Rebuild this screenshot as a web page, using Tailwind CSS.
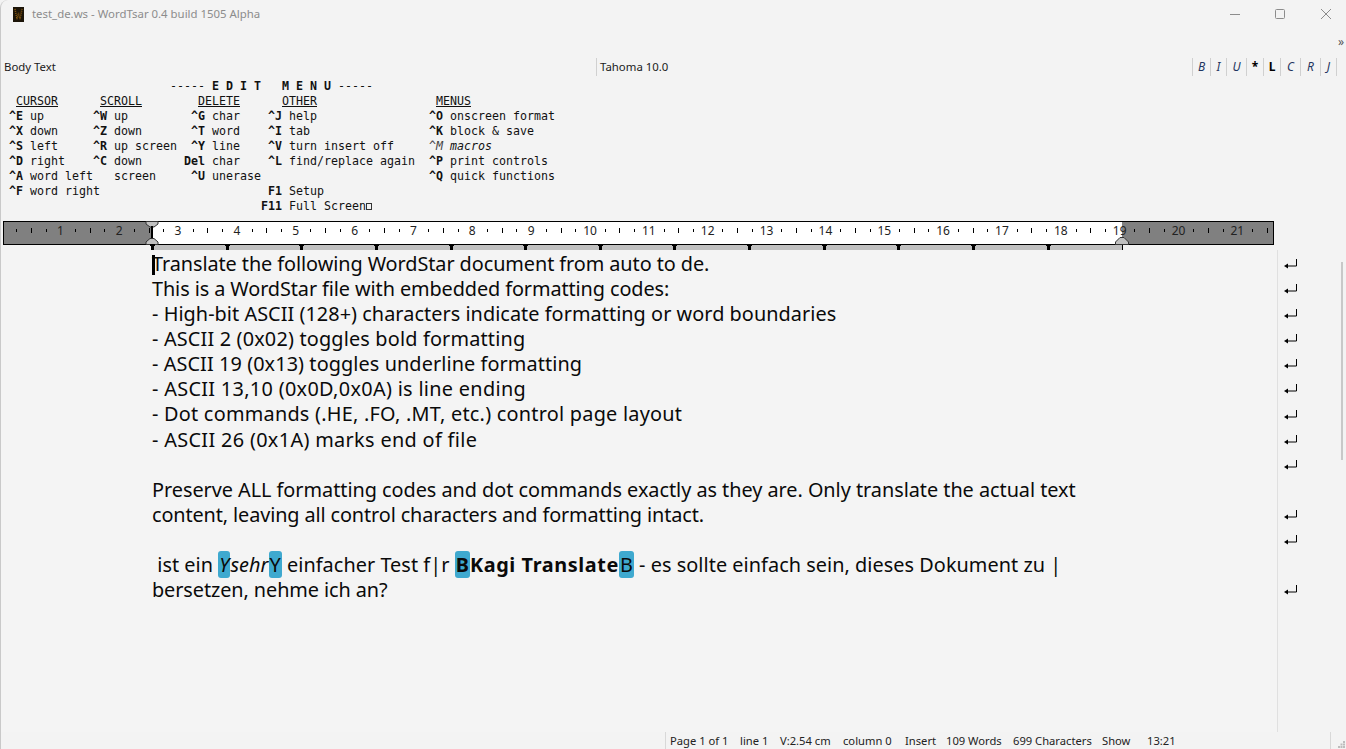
<!DOCTYPE html>
<html lang="en">
<head>
  <meta charset="UTF-8" />
  <title>WordTsar</title>
  <script src="https://cdn.jsdelivr.net/npm/@tailwindcss/browser@4"></script>
</head>
<body class="bg-[#f3f3f3] font-['Noto_Sans',sans-serif] overflow-hidden">
<div class="h-[749px] w-[1346px] flex flex-col border-l border-[#c9c9c9] rounded-tl-lg overflow-hidden">

  <!-- Title bar -->
  <div class="h-[28px] flex items-center shrink-0">
    <svg class="ml-[12px]" width="11" height="15" viewBox="0 0 11 15">
      <rect width="11" height="15" fill="#1c1408"/>
      <path d="M2 2 L4 12 L5.5 6 L7 12 L9 2" fill="none" stroke="#8a5a10" stroke-width="1.5" stroke-dasharray="1 1"/>
    </svg>
    <span class="ml-[8px] text-[11.4px] text-[#8c8c8c]">test_de.ws - WordTsar 0.4 build 1505 Alpha</span>
    <div class="ml-auto flex items-center">
      <svg class="mr-[35px]" width="10" height="10" viewBox="0 0 10 10"><path d="M0 5.5H10" stroke="#8c8c8c"/></svg>
      <svg class="mr-[36px]" width="10" height="10" viewBox="0 0 10 10"><rect x="0.5" y="0.5" width="9" height="9" rx="1" fill="none" stroke="#8c8c8c"/></svg>
      <svg class="mr-[15px]" width="10" height="10" viewBox="0 0 10 10"><path d="M0 0L10 10M10 0L0 10" stroke="#8c8c8c"/></svg>
    </div>
  </div>

  <!-- Toolbar overflow -->
  <div class="h-[28px] flex justify-end shrink-0 text-[12px] leading-[28px] text-[#555] pr-[2px]">»</div>

  <!-- Format bar -->
  <div class="h-[22px] flex items-center shrink-0 text-[11.4px] text-[#1a1a1a]">
    <span class="ml-[3px] w-[592px]">Body Text</span>
    <span class="border-l border-[#d0d0d0] pl-[3px] h-[18px] leading-[18px]">Tahoma 10.0</span>
    <div class="ml-auto flex text-[12px] h-[18px] leading-[18px] text-center italic text-[#1f3560] border-r border-[#d0d0d0] mr-[9px]">
      <span class="border-l border-[#d0d0d0] w-[18px]">B</span>
      <span class="border-l border-[#d0d0d0] w-[16px]">I</span>
      <span class="border-l border-[#d0d0d0] w-[20px]">U</span>
      <span class="border-l border-[#d0d0d0] w-[17px] not-italic font-bold text-black">*</span>
      <span class="border-l border-[#d0d0d0] w-[17px] not-italic font-bold text-black">L</span>
      <span class="border-l border-[#d0d0d0] w-[20px]">C</span>
      <span class="border-l border-[#d0d0d0] w-[20px]">R</span>
      <span class="border-l border-[#d0d0d0] w-[16px]">J</span>
    </div>
  </div>

  <!-- Edit menu -->
<pre class="h-[143px] shrink-0 pl-[1px] pt-[1px] font-['DejaVu_Sans_Mono',monospace] text-[11.63px] leading-[15px] text-[#111]">                        ----- <b>E D I T   M E N U</b> -----
  <u>CURSOR</u>      <u>SCROLL</u>        <u>DELETE</u>      <u>OTHER</u>                 <u>MENUS</u>
 <b>^E</b> up       <b>^W</b> up         <b>^G</b> char    <b>^J</b> help                <b>^O</b> onscreen format
 <b>^X</b> down     <b>^Z</b> down       <b>^T</b> word    <b>^I</b> tab                 <b>^K</b> block &amp; save
 <b>^S</b> left     <b>^R</b> up screen  <b>^Y</b> line    <b>^V</b> turn insert off     <i class="text-[#444]">^M</i> <i>macros</i>
 <b>^D</b> right    <b>^C</b> down      <b>Del</b> char    <b>^L</b> find/replace again  <b>^P</b> print controls
 <b>^A</b> word left   screen     <b>^U</b> unerase                        <b>^Q</b> quick functions
 <b>^F</b> word right                        <b>F1</b> Setup
                                     <b>F11</b> Full Screen<span class="inline-block w-[6px] h-[7px] border border-[#333]"></span></pre>

  <!-- Ruler -->
  <div class="shrink-0 pl-[2px] w-[1273px]">
    <div id="ruler" class="relative h-[24px] border border-black flex text-[12px] text-[#222]">
      <div class="w-[148px] bg-[#808080]"></div>
      <div class="w-[970px] bg-white"></div>
      <div class="flex-1 bg-[#808080]"></div>
    </div>
    <div id="tabs" class="relative h-[5px] ml-[149px] w-[971px] bg-[#c0c0c0]"></div>
  </div>

  <!-- Document area -->
  <div class="flex flex-1 min-h-0">
    <div class="relative w-[1276px] pl-[151px] pt-[1px] bg-[#f4f4f4] text-[19.85px] leading-[25.08px] text-[#0a0a0a] *:whitespace-pre">
      <div class="absolute left-[151px] top-[5px] w-[3px] h-[20px] bg-black"></div>
      <div class="tracking-[-0.07px]">Translate the following WordStar document from auto to de.</div>
      <div class="tracking-[-0.09px]">This is a WordStar file with embedded formatting codes:</div>
      <div class="tracking-[0.05px]">- High-bit ASCII (128+) characters indicate formatting or word boundaries</div>
      <div class="tracking-[0.175px]">- ASCII 2 (0x02) toggles bold formatting</div>
      <div class="tracking-[0.09px]">- ASCII 19 (0x13) toggles underline formatting</div>
      <div class="tracking-[0.32px]">- ASCII 13,10 (0x0D,0x0A) is line ending</div>
      <div class="tracking-[0.25px]">- Dot commands (.HE, .FO, .MT, etc.) control page layout</div>
      <div class="tracking-[0.34px]">- ASCII 26 (0x1A) marks end of file</div>
      <div>&nbsp;</div>
      <div class="tracking-[-0.03px]">Preserve ALL formatting codes and dot commands exactly as they are. Only translate the actual text</div>
      <div class="tracking-[-0.11px]">content, leaving all control characters and formatting intact.</div>
      <div>&nbsp;</div>
      <div class="tracking-[0.05px]"> ist ein <i class="bg-[#3fa9cf] rounded-[3px] px-[1px]">Y</i><i>sehr</i><span class="bg-[#3fa9cf] rounded-[3px] px-[1px]">Y</span> einfacher Test f|r <b class="bg-[#3fa9cf] rounded-[3px] px-[1px]">B</b><b class="tracking-[0.6px]">Kagi Translate</b><span class="bg-[#3fa9cf] rounded-[3px] px-[1px]">B</span> - es sollte einfach sein, dieses Dokument zu |</div>
      <div class="tracking-[-0.08px]">bersetzen, nehme ich an?</div>
    </div>

    <!-- Margin with return marks -->
    <div id="marks" class="w-[64px] border-l border-[#e0e0e0] pt-[1px] pl-[5px]"></div>

    <!-- Scrollbar -->
    <div class="flex-1 pt-[12px]"><div class="w-[2px] h-[198px] bg-[#c8c8c8]"></div></div>
  </div>

  <!-- Status bar -->
  <div class="h-[17px] shrink-0 flex items-center text-[11.2px] leading-[18px] text-[#222] relative">
    <div class="ml-[664px] border-l border-[#d8d8d8] pl-[4px] flex h-full">
      <span class="w-[70px]">Page 1 of 1</span>
      <span class="w-[40px]">line 1</span>
      <span class="w-[63px]">V:2.54 cm</span>
      <span class="w-[62px]">column 0</span>
      <span class="w-[41px]">Insert</span>
      <span class="w-[67px]">109 Words</span>
      <span class="w-[89px]">699 Characters</span>
      <span class="w-[45px]">Show</span>
      <span class="w-[183px]">13:21</span>
    </div>
    <div class="border-l border-[#d8d8d8] h-full"></div>
    <svg class="absolute right-[1px] bottom-[1px]" width="7" height="7" viewBox="0 0 7 7" fill="#bdbdbd">
      <rect x="5" y="0" width="2" height="2"/><rect x="2.5" y="2.5" width="2" height="2"/><rect x="5" y="2.5" width="2" height="2"/>
      <rect x="0" y="5" width="2" height="2"/><rect x="2.5" y="5" width="2" height="2"/><rect x="5" y="5" width="2" height="2"/>
    </svg>
  </div>
</div>

<script>
  // ruler ticks and numbers
  const ruler = document.getElementById('ruler');
  const cm = 58.85;
  for (let k = 1; k <= 86; k++) {
    const x = -2.5 + k * cm / 4;
    if (k % 4 === 0) {
      const n = document.createElement('span');
      n.className = 'absolute top-[1px] leading-[16px] -translate-x-1/2';
      n.style.left = x + 'px';
      n.textContent = k / 4;
      ruler.appendChild(n);
    } else {
      const t = document.createElement('div');
      t.className = k % 4 === 2 ? 'absolute top-[6px] w-px h-[5px] bg-black' : 'absolute top-[7px] w-px h-[3px] bg-black';
      t.style.left = Math.round(x) + 'px';
      ruler.appendChild(t);
    }
  }

  // margin markers
  ruler.insertAdjacentHTML('beforeend', `
    <svg class="absolute left-[141px] -top-px" width="14" height="24" viewBox="0 0 14 24">
      <path d="M1 .5H13V3L9 6H5L1 3Z" fill="#c0c0c0" stroke="#333"/>
      <path d="M7 5V18" stroke="#000" stroke-width="2"/>
      <path d="M1 23.5V21L5 17.5H9L13 21V23.5Z" fill="#c0c0c0" stroke="#333"/>
    </svg>
    <svg class="absolute left-[1111px] top-[15px]" width="14" height="8" viewBox="0 0 14 8">
      <path d="M.5 7.5V5L5 .5H9L13.5 5V7.5Z" fill="#c0c0c0" stroke="#333"/>
    </svg>`);

  // tab stops
  const tabs = document.getElementById('tabs');
  for (let i = 0; i <= 12; i++) {
    const t = document.createElement('div');
    t.className = 'absolute -top-px w-[5px] h-[6px] border-t-2 border-black';
    t.style.left = (i * 74.64 - 2) + 'px';
    t.innerHTML = '<div class="mx-auto w-[3px] h-[5px] bg-black"></div>';
    tabs.appendChild(t);
  }
  tabs.insertAdjacentHTML('beforeend', '<div class="absolute right-0 top-0 w-px h-[5px] bg-black"></div>');

  // return marks, some rows are wrapped lines with no mark
  const marks = document.getElementById('marks');
  [1,1,1,1,1,1,1,1,1,0,1,1,0,1].forEach(on => {
    const row = document.createElement('div');
    row.className = 'h-[25.08px] flex items-center';
    if (on) row.innerHTML = '<svg width="15" height="11" viewBox="0 0 15 11"><path d="M13.5 1V8H3" fill="none" stroke="#000"/><path d="M1 8L5 5.5V10.5Z" fill="#000"/></svg>';
    marks.appendChild(row);
  });
</script>
</body>
</html>
